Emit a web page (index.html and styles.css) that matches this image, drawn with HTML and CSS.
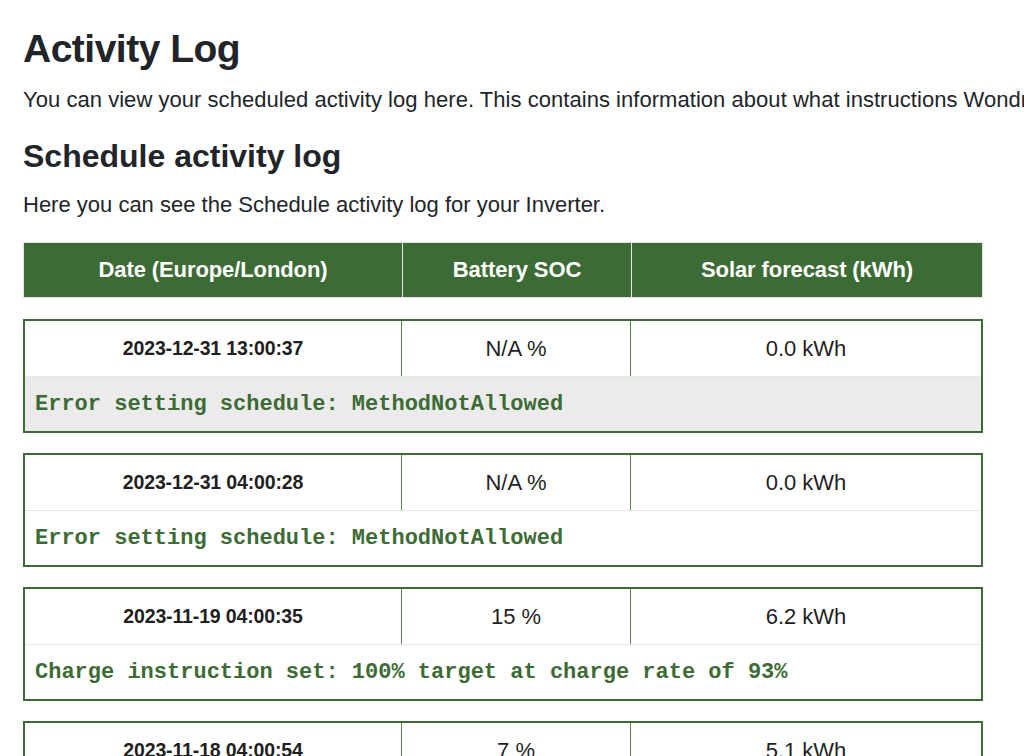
FILE: index.html
```html
<!DOCTYPE html>
<html lang="en">
<head>
<meta charset="utf-8">
<title>Activity Log</title>
<link rel="stylesheet" href="styles.css">
</head>
<body>
<main class="page">
  <h1 class="title">Activity Log</h1>
  <p class="lead">You can view your scheduled activity log here. This contains information about what instructions Wondrwall has sent to your inverter.</p>
  <h2 class="subtitle">Schedule activity log</h2>
  <p class="intro">Here you can see the Schedule activity log for your Inverter.</p>

  <div class="log">
    <div class="log-head">
      <div class="cell c-date">Date (Europe/London)</div>
      <div class="cell c-soc">Battery SOC</div>
      <div class="cell c-solar">Solar forecast (kWh)</div>
    </div>

    <div class="entry">
      <div class="entry-cells">
        <div class="cell c-date date">2023-12-31 13:00:37</div>
        <div class="cell c-soc">N/A %</div>
        <div class="cell c-solar">0.0 kWh</div>
      </div>
      <div class="entry-msg active">Error setting schedule: MethodNotAllowed</div>
    </div>

    <div class="entry">
      <div class="entry-cells">
        <div class="cell c-date date">2023-12-31 04:00:28</div>
        <div class="cell c-soc">N/A %</div>
        <div class="cell c-solar">0.0 kWh</div>
      </div>
      <div class="entry-msg">Error setting schedule: MethodNotAllowed</div>
    </div>

    <div class="entry">
      <div class="entry-cells">
        <div class="cell c-date date">2023-11-19 04:00:35</div>
        <div class="cell c-soc">15 %</div>
        <div class="cell c-solar">6.2 kWh</div>
      </div>
      <div class="entry-msg">Charge instruction set: 100% target at charge rate of 93%</div>
    </div>

    <div class="entry">
      <div class="entry-cells">
        <div class="cell c-date date">2023-11-18 04:00:54</div>
        <div class="cell c-soc">7 %</div>
        <div class="cell c-solar">5.1 kWh</div>
      </div>
      <div class="entry-msg">Charge instruction set: 100% target at charge rate of 93%</div>
    </div>
  </div>
</main>
</body>
</html>
```

FILE: styles.css
```css
html, body {
  margin: 0;
  padding: 0;
  background: #ffffff;
  overflow-x: hidden;
}

body {
  font-family: "Liberation Sans", Arial, sans-serif;
  color: #212529;
}

.page {
  padding: 26px 0 40px 23px;
}

.title {
  margin: 0;
  font-size: 39px;
  line-height: 46px;
  font-weight: 700;
  letter-spacing: -0.5px;
}

.lead {
  margin: 11px 0 0;
  font-size: 22px;
  line-height: 33px;
  letter-spacing: 0.04px;
  white-space: nowrap;
}

.subtitle {
  margin: 21px 0 0;
  font-size: 32px;
  line-height: 38px;
  font-weight: 700;
}

.intro {
  margin: 13px 0 0;
  font-size: 22px;
  line-height: 33px;
}

.log {
  margin-top: 21px;
  width: 960px;
  display: flex;
  flex-direction: column;
  gap: 20px;
}

.log-head {
  display: flex;
  height: 56px;
  background: #3d6b35;
  color: #ffffff;
  font-weight: 700;
  font-size: 22px;
  letter-spacing: -0.1px;
  border: 1px solid #dfe5dd;
  box-sizing: border-box;
  margin-bottom: 1px;
}

.cell {
  display: flex;
  align-items: center;
  justify-content: center;
  box-sizing: border-box;
}

.c-date { width: 378px; }
.c-soc { width: 229px; }
.c-solar { flex: 1; }

.log-head .c-soc,
.log-head .c-solar {
  border-left: 1px solid #e3e8e1;
}

.entry {
  border: 2px solid #3d6b35;
  box-sizing: border-box;
  height: 114px;
  display: flex;
  flex-direction: column;
}

.entry-cells {
  display: flex;
  height: 55px;
  border-bottom: 1px solid #e6e6e6;
  font-size: 22px;
  color: #1f1f1f;
}

.entry-cells .c-date {
  width: 376px;
}

.entry-cells .c-soc,
.entry-cells .c-solar {
  border-left: 1px solid #5e7d57;
}

.date {
  font-size: 19.5px;
  font-weight: 700;
  letter-spacing: -0.15px;
}

.entry-msg {
  flex: 1;
  display: flex;
  align-items: center;
  padding-left: 10px;
  font-family: "Liberation Mono", "Courier New", monospace;
  font-weight: 700;
  font-size: 22px;
  color: #3d6b35;
  white-space: nowrap;
}

.entry-msg.active {
  background: #ebebeb;
}
```
